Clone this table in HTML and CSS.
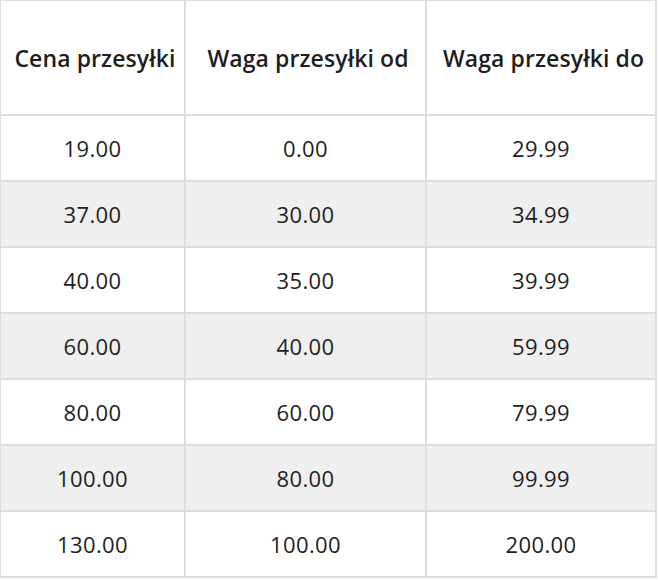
FILE: index.html
```html
<!DOCTYPE html>
<html lang="pl">
<head>
<meta charset="utf-8">
<link rel="stylesheet" href="styles.css">
</head>
<body>
<table class="rates">
  <colgroup>
    <col class="c1"><col class="c2"><col class="c3">
  </colgroup>
  <thead>
    <tr><th>Cena przesyłki</th><th>Waga przesyłki od</th><th>Waga przesyłki do</th></tr>
  </thead>
  <tbody>
    <tr><td>19.00</td><td>0.00</td><td>29.99</td></tr>
    <tr><td>37.00</td><td>30.00</td><td>34.99</td></tr>
    <tr><td>40.00</td><td>35.00</td><td>39.99</td></tr>
    <tr><td>60.00</td><td>40.00</td><td>59.99</td></tr>
    <tr><td>80.00</td><td>60.00</td><td>79.99</td></tr>
    <tr><td>100.00</td><td>80.00</td><td>99.99</td></tr>
    <tr><td>130.00</td><td>100.00</td><td>200.00</td></tr>
  </tbody>
</table>
</body>
</html>
```

FILE: styles.css
```css
html, body {
  margin: 0;
  padding: 0;
  background: #ffffff;
}
.rates {
  border-collapse: separate;
  border-spacing: 0;
  border-left: 1px solid #dddddd;
  border-top: 1px solid #dddddd;
  table-layout: fixed;
  width: 657px;
  font-family: "Open Sans", "Noto Sans", sans-serif;
  color: #1e1e1e;
}
.c1 { width: 185px; }
.c2 { width: 241px; }
.c3 { width: 230px; }
.rates th,
.rates td {
  border-right: 2px solid #dddddd;
  border-bottom: 2px solid #dddddd;
  text-align: center;
  padding: 0;
  white-space: nowrap;
}
.rates th {
  height: 113px;
  padding-left: 5px;
  font-size: 23px;
  font-weight: 600;
  letter-spacing: 0.1px;
}
.rates td {
  height: 64px;
  font-size: 22px;
  font-weight: 400;
  letter-spacing: 0.4px;
}
.rates tbody tr:nth-child(even) td {
  background: #efefef;
}
```
